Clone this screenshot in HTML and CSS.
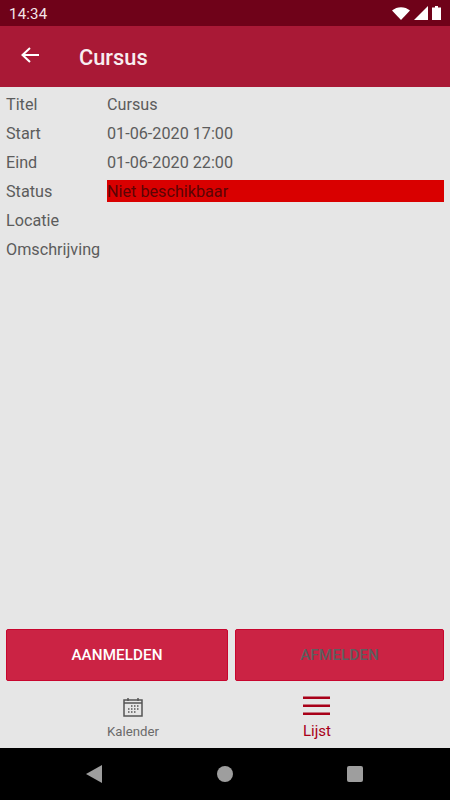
FILE: index.html
```html
<!DOCTYPE html>
<html lang="en">
<head>
  <meta charset="UTF-8" />
  <meta name="viewport" content="width=device-width, initial-scale=1.0"/>
  <title>Cursus</title>
  <link rel="stylesheet" href="styles.css">
</head>
<body>
  <div class="phone">
    <!-- Status bar -->
    <div class="status-bar">
      <span class="clock">14:34</span>
      <div class="status-icons">
        <svg width="18" height="13" viewBox="0 0 18 13"><path d="M0 3.5 C5 -1 13 -1 18 3.5 L9 13 Z" fill="#fff"/></svg>
        <svg width="14" height="14" viewBox="0 0 14 14"><path d="M14 0 V14 H0 Z" fill="#fff"/></svg>
        <svg width="9" height="14" viewBox="0 0 9 14"><path d="M3 0 H6 V1.500 H9 V14 H0 V1.500 H3 Z" fill="#fff"/></svg>
      </div>
    </div>

    <!-- App bar -->
    <div class="app-bar">
      <svg class="back-icon" width="20" height="18" viewBox="0 0 20 18"><path d="M19 9 H3 M10 2 L2.500 9 L10 16" fill="none" stroke="#fff" stroke-width="2"/></svg>
      <h1>Cursus</h1>
    </div>

    <!-- Details -->
    <div class="details">
      <div class="row"><span class="label">Titel</span><span class="value">Cursus</span></div>
      <div class="row"><span class="label">Start</span><span class="value">01-06-2020 17:00</span></div>
      <div class="row"><span class="label">Eind</span><span class="value">01-06-2020 22:00</span></div>
      <div class="row"><span class="label">Status</span><span class="value status-value">Niet beschikbaar</span></div>
      <div class="row"><span class="label">Locatie</span><span class="value"></span></div>
      <div class="row"><span class="label">Omschrijving</span><span class="value"></span></div>
    </div>

    <!-- Buttons -->
    <div class="actions">
      <button class="action-btn signup">AANMELDEN</button>
      <button class="action-btn signoff">AFMELDEN</button>
    </div>

    <!-- Tabs -->
    <div class="tabs">
      <div class="tab">
        <svg width="20" height="20" viewBox="0 0 20 20">
          <path d="M1 3 H19 V19 H1 Z" fill="none" stroke="#555" stroke-width="1.500"/>
          <path d="M1 6 H19" stroke="#555" stroke-width="1.500"/>
          <path d="M5 1 V4 M15 1 V4" stroke="#555" stroke-width="1.500"/>
          <path d="M8 9 H9.500 M11 9 H12.500 M14 9 H15.500 M5 12 H6.500 M8 12 H9.500 M11 12 H12.500 M14 12 H15.500 M5 15 H6.500 M8 15 H9.500 M11 15 H12.500" stroke="#555" stroke-width="1.300"/>
        </svg>
        <span>Kalender</span>
      </div>
      <div class="tab active">
        <svg width="27" height="20" viewBox="0 0 27 20"><path d="M0 1.700 H27 M0 9.700 H27 M0 17.700 H27" stroke="#a80018" stroke-width="2.600"/></svg>
        <span>Lijst</span>
      </div>
    </div>

    <!-- Android nav -->
    <div class="nav-bar">
      <svg width="16" height="18" viewBox="0 0 16 18"><path d="M16 0 V18 L0 9 Z" fill="#9e9e9e"/></svg>
      <svg width="16" height="16" viewBox="0 0 16 16"><circle cx="8" cy="8" r="8" fill="#9e9e9e"/></svg>
      <svg width="16" height="16" viewBox="0 0 16 16"><rect width="16" height="16" rx="2" fill="#9e9e9e"/></svg>
    </div>
  </div>
</body>
</html>
```

FILE: styles.css
```css
* {
  margin: 0;
  padding: 0;
  box-sizing: border-box;
  font-family: Roboto, sans-serif;
}

body {
  background-color: #e6e6e6;
}

.phone {
  width: 450px;
  height: 800px;
  display: flex;
  flex-direction: column;
  overflow: hidden;
}

.status-bar {
  height: 26px;
  background: #6f0219;
  color: #f4e6e9;
  display: flex;
  align-items: center;
  justify-content: space-between;
  padding: 0 9px;
}

.clock {
  font-size: 15px;
  letter-spacing: 0.2px;
  margin-top: 1px;
}

.status-icons {
  display: flex;
  align-items: center;
  gap: 4px;
}

.app-bar {
  height: 61px;
  background: #a91936;
  display: flex;
  align-items: center;
  padding-left: 20px;
}

.back-icon {
  margin-right: 39px;
  margin-top: -3px;
}

.app-bar h1 {
  font-size: 21.8px;
  font-weight: 500;
  color: #f8eef0;
  margin-top: 1px;
}

.details {
  flex: 1;
  padding: 3px 6px 0;
}

.row {
  display: flex;
  align-items: center;
  height: 29px;
  font-size: 16.2px;
  color: #5c5c5c;
}

.label {
  width: 101px;
  flex-shrink: 0;
}

.value {
  flex: 1;
}

.status-value {
  background: #d90000;
  color: #5a0505;
  height: 22px;
  line-height: 23px;
  margin-bottom: 2px;
}

.actions {
  display: flex;
  gap: 7px;
  padding: 0 6px;
  height: 52px;
}

.action-btn {
  background: #cb2344;
  border: 1px solid #c8062e;
  border-radius: 2px;
  font-size: 15.2px;
  font-weight: 500;
  letter-spacing: 0.1px;
}

.signup {
  width: 222px;
  color: #fff;
}

.signoff {
  flex: 1;
  color: #5c5f5f;
}

.tabs {
  height: 67px;
  display: flex;
}

.tab {
  display: flex;
  flex-direction: column;
  align-items: center;
  font-size: 13.2px;
  color: #6a6a6a;
  padding-top: 16px;
  gap: 7px;
}

.tab:first-child {
  width: 266px;
}

.tab.active {
  flex: 1;
  color: #a80018;
  font-size: 15px;
  padding-top: 15px;
  gap: 6px;
  align-items: flex-start;
  padding-left: 37px;
}

.nav-bar {
  height: 52px;
  background: #000;
  display: flex;
  align-items: center;
  padding-left: 86px;
  gap: 115px;
}

.nav-bar svg:last-child {
  margin-left: -1px;
}
```
